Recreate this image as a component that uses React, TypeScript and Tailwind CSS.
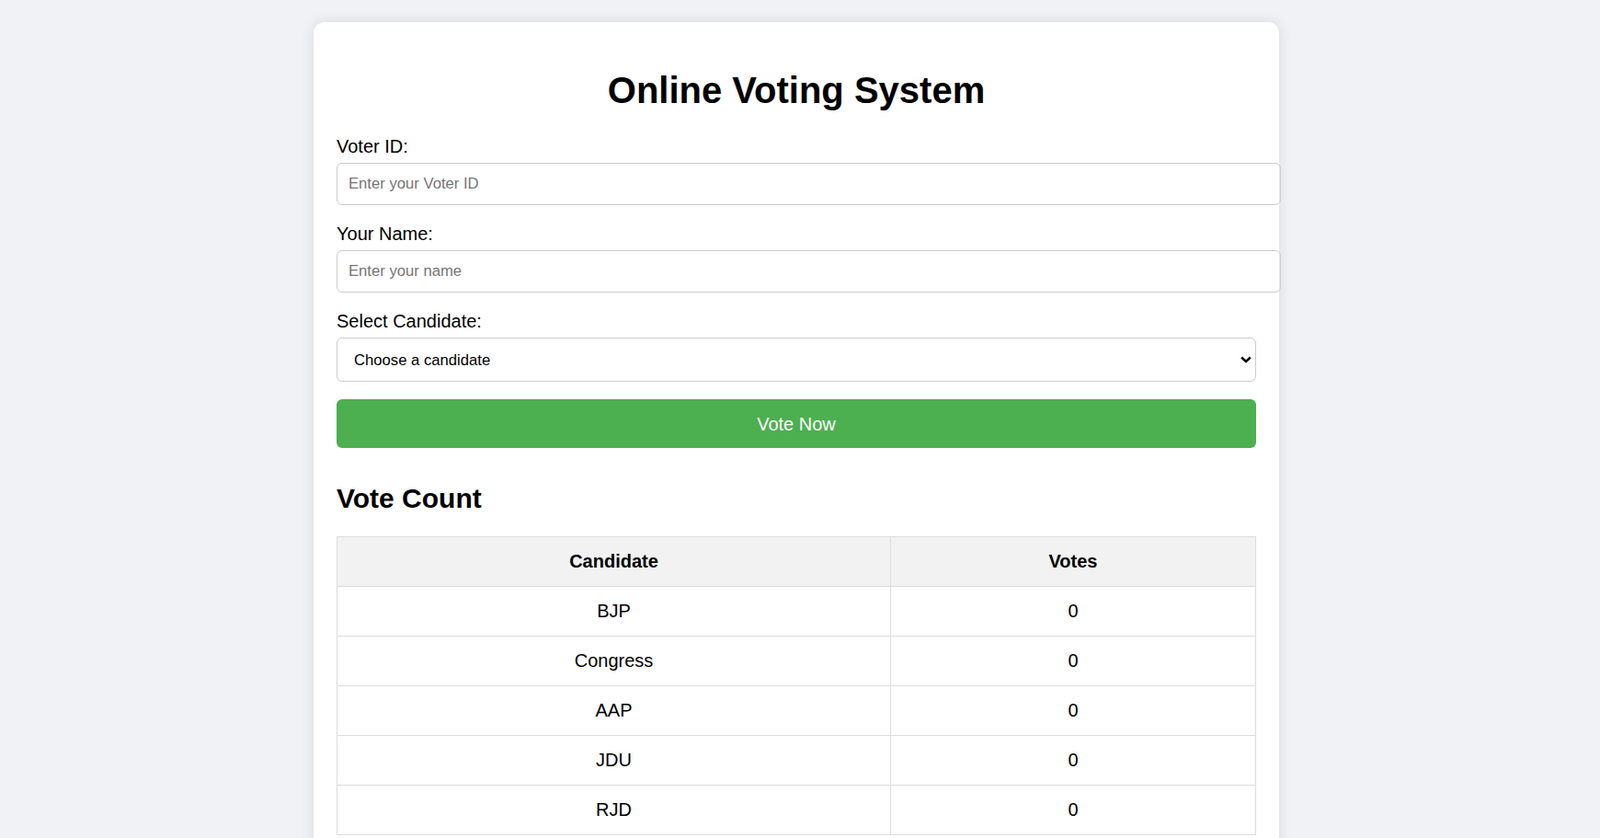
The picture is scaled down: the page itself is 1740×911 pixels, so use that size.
import { useState } from 'react'

const candidates = ['BJP', 'Congress', 'AAP', 'JDU', 'RJD']

function App() {
  const [voterId, setVoterId] = useState('')
  const [name, setName] = useState('')
  const [choice, setChoice] = useState('')
  const [votes, setVotes] = useState<Record<string, number>>(
    Object.fromEntries(candidates.map((c) => [c, 0]))
  )

  const handleVote = () => {
    if (!voterId.trim() || !name.trim() || !choice) return
    setVotes({ ...votes, [choice]: votes[choice] + 1 })
    setVoterId('')
    setName('')
    setChoice('')
  }

  return (
    <div className="w-full min-h-screen bg-[#f0f2f5] flex justify-center pt-[24px] pr-[8px] font-['Liberation_Sans',Arial,sans-serif] text-black">
      <div className="w-[1050px] h-fit bg-white rounded-[12px] shadow-[0_0_16px_rgba(0,0,0,0.1)] p-[25px]">
        <h1 className="text-[40px] leading-[46px] font-bold text-center mt-[26px] mb-[27px]">
          Online Voting System
        </h1>

        <label className="block text-[20px] leading-[23px] mb-[6px]">Voter ID:</label>
        <input
          value={voterId}
          onChange={(e) => setVoterId(e.target.value)}
          placeholder="Enter your Voter ID"
          className="block w-[calc(100%+27px)] h-[46px] px-[12px] mb-[20px] border border-[#cccccc] rounded-[6px] text-[16.67px] placeholder-[#757575] focus:outline-none"
        />

        <label className="block text-[20px] leading-[23px] mb-[6px]">Your Name:</label>
        <input
          value={name}
          onChange={(e) => setName(e.target.value)}
          placeholder="Enter your name"
          className="block w-[calc(100%+27px)] h-[46px] px-[12px] mb-[20px] border border-[#cccccc] rounded-[6px] text-[16.67px] placeholder-[#757575] focus:outline-none"
        />

        <label className="block text-[20px] leading-[23px] mb-[6px]">Select Candidate:</label>
        <div className="relative mb-[19px]">
          <select
            value={choice}
            onChange={(e) => setChoice(e.target.value)}
            className="block w-full h-[48px] appearance-none pl-[18px] pr-[30px] border border-[#cccccc] rounded-[6px] bg-white text-[16.67px] text-black focus:outline-none"
          >
            <option value="">Choose a candidate</option>
            {candidates.map((c) => (
              <option key={c} value={c}>
                {c}
              </option>
            ))}
          </select>
          <svg
            className="absolute right-[5px] top-1/2 -translate-y-1/2 pointer-events-none"
            width="12"
            height="8"
            viewBox="0 0 12 8"
          >
            <path d="M1.2 1.5 L6 6 L10.8 1.5" fill="none" stroke="#000" strokeWidth="2.4" />
          </svg>
        </div>

        <button
          onClick={handleVote}
          className="block w-full h-[53px] bg-[#4caf50] text-white text-[20px] rounded-[6px] cursor-pointer hover:bg-[#45a049]"
        >
          Vote Now
        </button>

        <h2 className="text-[30px] leading-[35px] font-bold mt-[37px] mb-[24px]">Vote Count</h2>

        <table className="w-full border-collapse text-[20px] leading-[23px]">
          <thead>
            <tr className="bg-[#f2f2f2]">
              <th className="w-[602px] border border-[#dddddd] py-[15px] text-center font-bold">
                Candidate
              </th>
              <th className="border border-[#dddddd] py-[15px] text-center font-bold">Votes</th>
            </tr>
          </thead>
          <tbody>
            {candidates.map((c) => (
              <tr key={c}>
                <td className="border border-[#dddddd] py-[15px] text-center">{c}</td>
                <td className="border border-[#dddddd] py-[15px] text-center">{votes[c]}</td>
              </tr>
            ))}
          </tbody>
        </table>
      </div>
    </div>
  )
}

export default App
